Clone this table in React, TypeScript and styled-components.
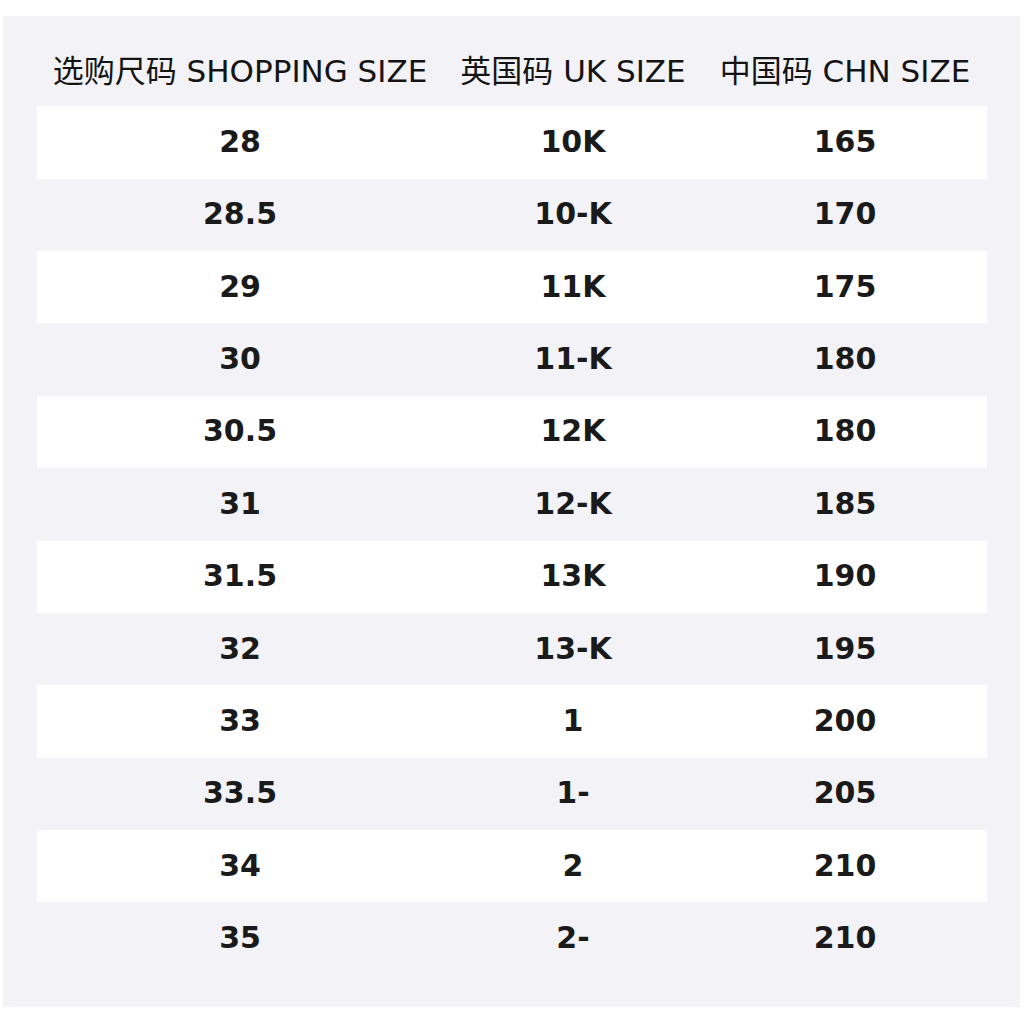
import React from "react";
import styled, { createGlobalStyle } from "styled-components";

const GlobalStyle = createGlobalStyle`
  html, body {
    margin: 0;
    padding: 0;
    background: #ffffff;
    font-family: "DejaVu Sans", "Noto Sans CJK SC", sans-serif;
  }
`;

const Page = styled.div`
  padding: 16px 4px 0 3px;
`;

const Panel = styled.div`
  width: 1017px;
  height: 991px;
  box-sizing: border-box;
  padding: 18px 33px 34px 34px;
  background: #f3f3f7;
`;

const Table = styled.div`
  display: flex;
  flex-direction: column;
  width: 950px;
`;

const Row = styled.div<{ $striped?: boolean }>`
  display: grid;
  grid-template-columns: 406px 260px 284px;
  height: 72.36px;
  align-items: center;
  background: ${(p) => (p.$striped ? "#ffffff" : "transparent")};
`;

const HeadCell = styled.div`
  text-align: center;
  font-size: 31px;
  font-weight: 400;
  color: #141414;
  padding-bottom: 4px;
  white-space: nowrap;
`;

const Cell = styled.div`
  text-align: center;
  font-size: 30px;
  font-weight: 700;
  color: #1a1a1a;
  padding-bottom: 2px;
  white-space: nowrap;
`;

const headers = ["选购尺码 SHOPPING SIZE", "英国码 UK SIZE", "中国码 CHN SIZE"];

const rows: [string, string, string][] = [
  ["28", "10K", "165"],
  ["28.5", "10-K", "170"],
  ["29", "11K", "175"],
  ["30", "11-K", "180"],
  ["30.5", "12K", "180"],
  ["31", "12-K", "185"],
  ["31.5", "13K", "190"],
  ["32", "13-K", "195"],
  ["33", "1", "200"],
  ["33.5", "1-", "205"],
  ["34", "2", "210"],
  ["35", "2-", "210"],
];

const App: React.FC = () => {
  return (
    <>
      <GlobalStyle />
      <Page>
        <Panel>
          <Table>
            <Row>
              {headers.map((h) => (
                <HeadCell key={h}>{h}</HeadCell>
              ))}
            </Row>
            {rows.map((r, i) => (
              <Row key={r[0]} $striped={i % 2 === 0}>
                {r.map((c, j) => (
                  <Cell key={j}>{c}</Cell>
                ))}
              </Row>
            ))}
          </Table>
        </Panel>
      </Page>
    </>
  );
};

export default App;
